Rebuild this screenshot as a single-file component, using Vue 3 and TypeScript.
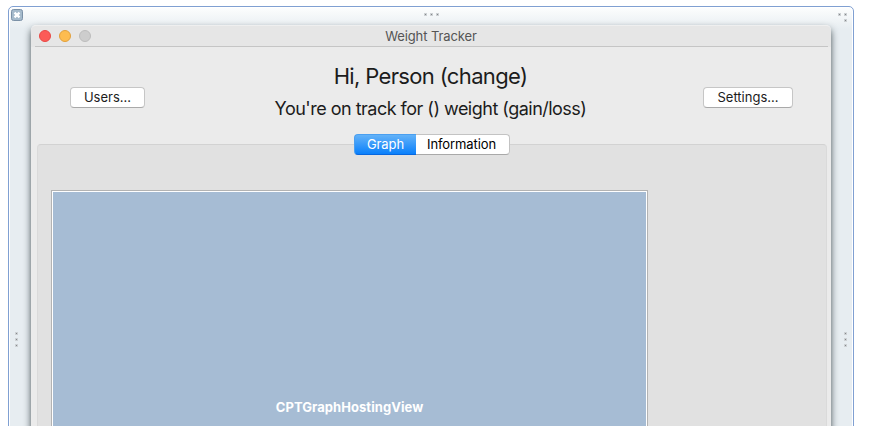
<script setup lang="ts">
import { ref } from 'vue'

const tabs = ['Graph', 'Information']
const active = ref('Graph')
</script>

<template>
  <div class="page">
    <div class="canvas">
      <svg class="close" width="12" height="12" viewBox="0 0 12 12">
        <rect x="0.5" y="0.5" width="11" height="11" rx="2" fill="#a5bacb" stroke="#7b91a7" />
        <path d="M3.5 3.7 8.5 8.3M8.5 3.7 3.5 8.3" stroke="#fff" stroke-width="2.3" />
      </svg>
      <div class="grip top"><i /><i /><i /></div>
      <div class="grip corner"><i /><i /><i /></div>
      <div class="grip side left"><i /><i /><i /></div>
      <div class="grip side right"><i /><i /><i /></div>

      <div class="window">
        <header class="titlebar">
          <div class="lights"><span class="red" /><span class="amber" /><span class="grey" /></div>
          <span class="title">Weight Tracker</span>
        </header>
        <section class="heading">
          <button class="push users"><span>Users...</span></button>
          <div class="labels">
            <div class="hello"><span>Hi, Person (change)</span></div>
            <div class="track"><span>You're on track for () weight (gain/loss)</span></div>
          </div>
          <button class="push settings"><span>Settings...</span></button>
        </section>
        <main class="panel">
          <div class="tabs">
            <button
              v-for="t in tabs"
              :key="t"
              :class="['tab', { active: t === active }]"
              @click="active = t"
            ><span>{{ t }}</span></button>
          </div>
          <div class="hosting-view"><span>CPTGraphHostingView</span></div>
        </main>
      </div>
    </div>
  </div>
</template>

<style>
body {
  background: #fff;
}
</style>

<style scoped>
* {
  box-sizing: border-box;
}
.page {
  height: 426px;
  padding: 6px 31px 0 8px;
  overflow: hidden;
  font-family: Inter, Roboto, sans-serif;
  font-size: 13px;
  color: #1c1c1c;
  white-space: nowrap;
}
.canvas {
  position: relative;
  width: 846px;
  height: 440px;
  padding: 18px 22px 0;
  border: 1px solid #80a0d2;
  border-radius: 5px;
  box-shadow: inset 0 0 0 1px #fff;
  background: linear-gradient(#fdfefe, #e7edf1 22px);
}
.close {
  position: absolute;
  left: 2px;
  top: 2px;
}
.grip {
  position: absolute;
  display: grid;
  gap: 3px;
}
.grip i {
  width: 3px;
  height: 3px;
  border: 1px solid #cdd1d4;
  background: #85888b;
}
.top {
  left: 415px;
  top: 6px;
  grid-template-columns: repeat(3, 3px);
}
.corner {
  right: 6px;
  top: 6px;
  grid-template-columns: 3px 3px;
}
.corner i:last-child {
  grid-column: 2;
}
.side {
  top: 325px;
}
.left {
  left: 6px;
}
.right {
  right: 6px;
}
.window {
  width: 800px;
  height: 430px;
  border-top: 1px solid #efefef;
  border-radius: 5px 5px 0 0;
  background: linear-gradient(#e6e6e6 21px, #ebebeb 21px);
  box-shadow: 0 4px 7px rgba(50, 62, 66, 0.9);
}
.titlebar {
  display: grid;
  grid-template-columns: 1fr auto 1fr;
  align-items: center;
  height: 21px;
  margin: 0 3px 0 4px;
  border-bottom: 1px solid #c5c5c5;
}
.lights {
  display: flex;
  gap: 8px;
  padding-left: 4px;
}
.lights span {
  width: 12px;
  height: 12px;
  border: 1px solid #e94845;
  border-radius: 50%;
  background: #fc5b57;
}
.lights .amber {
  border-color: #e2a03b;
  background: #fdbc4f;
}
.lights .grey {
  border-color: #bdbdbd;
  background: #cdcdcd;
}
.title {
  padding-right: 1px;
  color: #555;
  letter-spacing: -0.1px;
}
.heading {
  display: flex;
  align-items: flex-start;
  height: 97px;
  padding: 0 38px 0 39px;
}
.push {
  height: 21px;
  margin-top: 40px;
  padding: 0;
  border: 1px solid #c6c6c6;
  border-bottom-color: #a9a9a9;
  border-radius: 4px;
  background: #fff;
  font: inherit;
  line-height: 19px;
  color: #1c1c1c;
}
.users {
  width: 75px;
}
.settings {
  width: 90px;
}
.labels {
  flex: 1;
  padding-left: 13px;
  text-align: center;
}
.hello {
  height: 37px;
  margin-top: 11px;
  font-size: 22px;
  line-height: 36px;
  letter-spacing: -0.65px;
}
.track {
  font-size: 18px;
  line-height: 28px;
  letter-spacing: -0.51px;
}
.panel {
  position: relative;
  height: 300px;
  margin: 0 4px 0 6px;
  padding: 45px 13px 0;
  border: 1px solid #dadada;
  border-top-color: #d2d2d2;
  border-radius: 4px;
  background: #e1e1e1;
}
.tabs {
  position: absolute;
  left: 316px;
  top: -11px;
  display: flex;
  height: 21px;
}
.tab {
  width: 94px;
  padding: 0 2px 0 0;
  border: 1px solid #c3c3c3;
  border-left: 0;
  border-bottom-color: #a9a9a9;
  border-radius: 0 4px 4px 0;
  background: #fff;
  font: inherit;
  line-height: 19px;
  letter-spacing: -0.1px;
  color: #000;
}
.tab.active {
  width: 62px;
  padding: 0;
  border: 1px solid #4a9ff0;
  border-bottom-color: #0767df;
  border-right: 0;
  border-radius: 4px 0 0 4px;
  background: linear-gradient(#63b2f8, #0a80fb);
  color: #fff;
}
.hosting-view {
  width: 597px;
  height: 434px;
  border: 1px solid #b3b3b3;
  box-shadow: inset 0 0 0 1px #fff;
  background: #a6bcd4;
  color: #fff;
  font-weight: 700;
  line-height: 432px;
  letter-spacing: 0.06px;
  text-align: center;
}
</style>
